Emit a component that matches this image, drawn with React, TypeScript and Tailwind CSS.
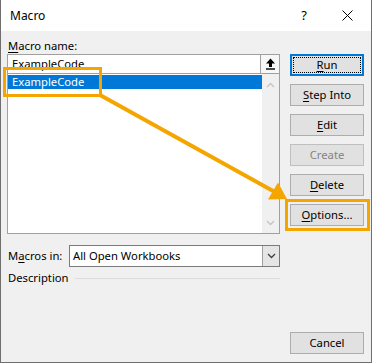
import React from "react";

const font = { fontFamily: '"Noto Sans", "Open Sans", sans-serif' };

function Btn({
  children,
  disabled,
}: {
  children: React.ReactNode;
  disabled?: boolean;
}) {
  return (
    <div
      className={
        "h-[22px] w-[74px] border flex items-center justify-center text-[11.25px] " +
        (disabled
          ? "border-[#bfbfbf] bg-[#e1e1e1] text-[#838383]"
          : "border-[#adadad] bg-[#e1e1e1] text-black")
      }
    >
      {children}
    </div>
  );
}

function Chevron({ up, color }: { up?: boolean; color: string }) {
  return (
    <svg width="9" height="6" viewBox="0 0 9 6">
      <polyline
        points={up ? "1,5 4.5,1.5 8,5" : "1,1 4.5,4.5 8,1"}
        fill="none"
        stroke={color}
        strokeWidth="1.3"
      />
    </svg>
  );
}

export default function App() {
  return (
    <div
      className="relative w-[372px] h-[363px] bg-[#f0f0f0] border-x border-b border-[#6f6f6f] text-black select-none"
      style={font}
    >
      {/* Title bar */}
      <div className="h-[31px] bg-white flex items-center pl-[9px] pr-[18px] text-[12px]">
        <span className="flex-1">Macro</span>
        <span className="mr-[35px] text-[13px]">?</span>
        <svg width="11" height="11" viewBox="0 0 11 11">
          <path d="M0.5 0.5 L10.5 10.5 M10.5 0.5 L0.5 10.5" stroke="#000" strokeWidth="1" />
        </svg>
      </div>

      {/* Body */}
      <div className="flex pl-[6px] pr-[7px] pt-[6px]">
        {/* Left column */}
        <div className="w-[274px] flex flex-col">
          <div className="h-[17px] text-[11.25px] leading-[17px] pl-[1px]">
            <span className="underline underline-offset-2">M</span>acro name:
          </div>
          <div className="h-[20px] bg-white border border-[#a0a0a0] flex items-center">
            <span className="flex-1 pl-[4px] text-[11.25px] leading-[18px]">ExampleCode</span>
            <div className="h-[18px] w-[19px] border-l border-[#a0a0a0] bg-[#f7f7f7] flex items-center justify-center">
              <svg width="11" height="12" viewBox="0 0 11 12">
                <path d="M5.5 0.5 L10 5.5 L7 5.5 L7 9 L4 9 L4 5.5 L1 5.5 Z" fill="#000" />
                <rect x="1" y="10.3" width="9" height="1.4" fill="#000" />
              </svg>
            </div>
          </div>
          <div className="h-[160px] bg-white border-x border-b border-[#a0a0a0] flex">
            <div className="flex-1 pt-[1px]">
              <div className="h-[14px] bg-[#0078d7] text-white text-[11.25px] leading-[14px] pl-[4px]">
                ExampleCode
              </div>
            </div>
            <div className="w-[17px] bg-[#f0f0f0] flex flex-col items-center justify-between pt-[8px] pb-[7px]">
              <Chevron up color="#c4c4c4" />
              <Chevron color="#c4c4c4" />
            </div>
          </div>

          <div className="flex items-center mt-[11px] h-[22px]">
            <span className="w-[62px] pl-[1px] text-[11.25px]">
              M<span className="underline underline-offset-2">a</span>cros in:
            </span>
            <div className="flex-1 h-[22px] bg-white border border-[#7a7a7a] flex items-center">
              <span className="flex-1 pl-[3px] text-[11.25px]">All Open Workbooks</span>
              <div className="h-[20px] w-[17px] bg-[#e5e5e5] border-l border-[#a0a0a0] flex items-center justify-center">
                <Chevron color="#404040" />
              </div>
            </div>
          </div>

          <div className="flex items-center mt-[3px] h-[16px]">
            <span className="pl-[1px] text-[11.25px] mr-[6px]">Description</span>
            <div className="flex-1 h-px bg-[#dcdcdc]" />
          </div>
        </div>

        {/* Right column */}
        <div className="ml-[10px] w-[74px] flex flex-col pt-[17px]">
          <div className="h-[22px] w-[74px] border-2 border-[#0078d7] bg-[#e1e1e1] p-[1px]">
            <div className="h-full border border-dotted border-black flex items-center justify-center text-[11.25px]">
              <span>
                <span className="underline underline-offset-2">R</span>un
              </span>
            </div>
          </div>
          <div className="mt-[8px]">
            <Btn>
              <span>
                <span className="underline underline-offset-2">S</span>tep Into
              </span>
            </Btn>
          </div>
          <div className="mt-[8px]">
            <Btn>
              <span>
                <span className="underline underline-offset-2">E</span>dit
              </span>
            </Btn>
          </div>
          <div className="mt-[8px]">
            <Btn disabled>Create</Btn>
          </div>
          <div className="mt-[8px]">
            <Btn>
              <span>
                <span className="underline underline-offset-2">D</span>elete
              </span>
            </Btn>
          </div>
          <div className="mt-[8px]">
            <Btn>
              <span>
                <span className="underline underline-offset-2">O</span>ptions...
              </span>
            </Btn>
          </div>
          <div className="mt-[106px]">
            <Btn>Cancel</Btn>
          </div>
        </div>
      </div>

      {/* Annotation overlay */}
      <div className="absolute left-[2px] top-[67px] w-[99px] h-[30px] border-[3px] border-[#f5a500] pointer-events-none" />
      <div className="absolute left-[284px] top-[199px] w-[85px] h-[32px] border-[3px] border-[#f5a500] pointer-events-none" />
      <svg
        className="absolute left-0 top-0 pointer-events-none"
        width="372"
        height="363"
        viewBox="0 0 372 363"
      >
        <line x1="99" y1="95" x2="273" y2="191.5" stroke="#f5a500" strokeWidth="4" />
        <polygon points="286,199 267,199.5 277,182.5" fill="#f5a500" />
      </svg>
    </div>
  );
}
